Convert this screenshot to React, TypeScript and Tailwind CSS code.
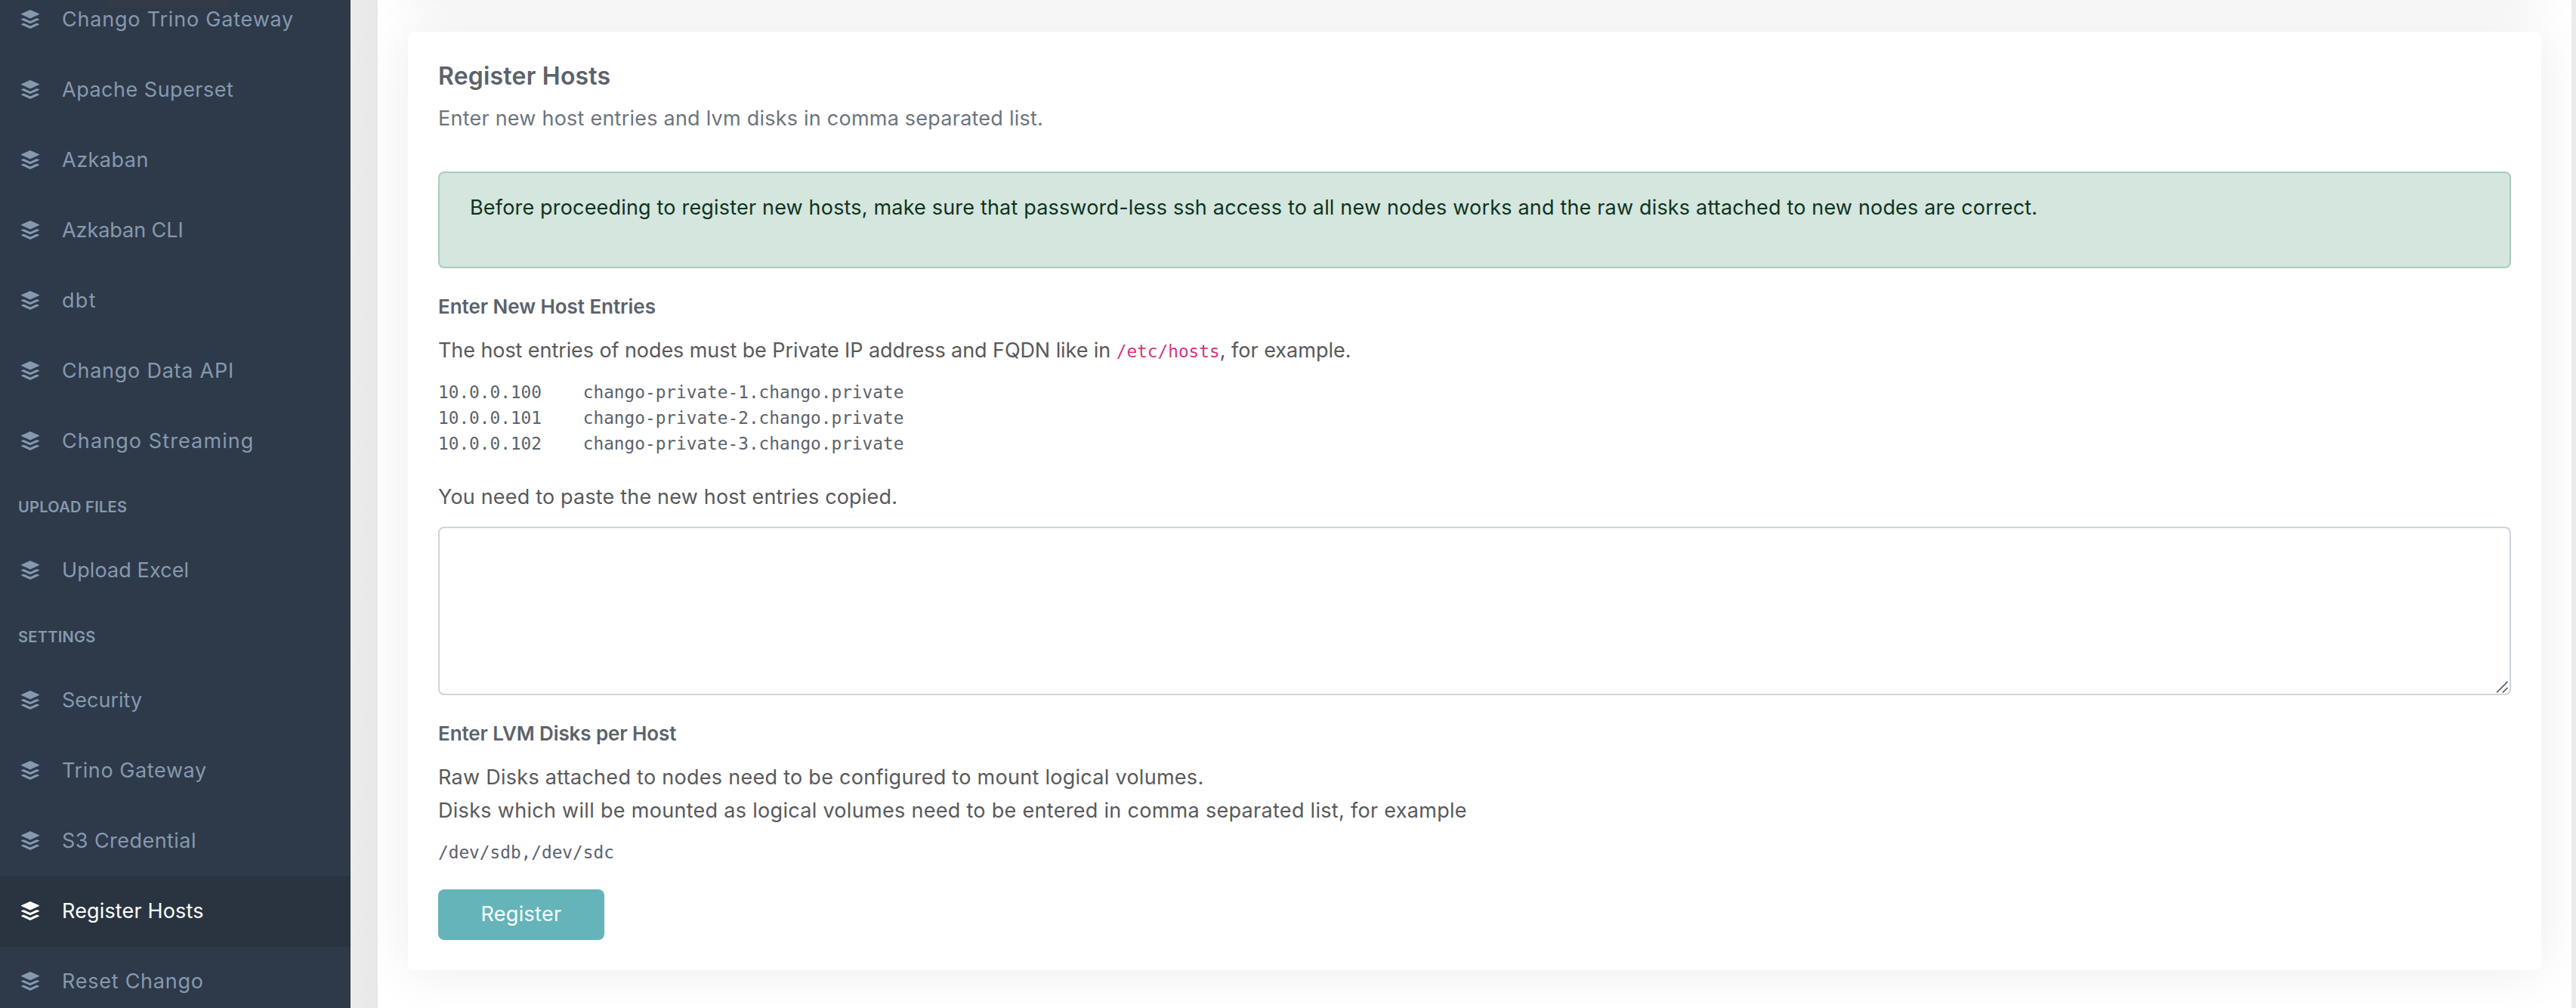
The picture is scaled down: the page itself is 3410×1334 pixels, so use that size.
type Entry = { label: string; ls: string; active?: boolean };

const apps: Entry[] = [
  { label: "Chango Trino Gateway", ls: "tracking-[0.8px]" },
  { label: "Apache Superset", ls: "tracking-[0.5px]" },
  { label: "Azkaban", ls: "tracking-[0.5px]" },
  { label: "Azkaban CLI", ls: "tracking-[-0.05px]" },
  { label: "dbt", ls: "tracking-[1.3px]" },
  { label: "Chango Data API", ls: "tracking-[0.75px]" },
  { label: "Chango Streaming", ls: "tracking-[1.1px]" },
];
const uploads: Entry[] = [{ label: "Upload Excel", ls: "tracking-[0.1px]" }];
const settings: Entry[] = [
  { label: "Security", ls: "tracking-normal" },
  { label: "Trino Gateway", ls: "tracking-[0.6px]" },
  { label: "S3 Credential", ls: "tracking-[0.45px]" },
  { label: "Register Hosts", ls: "tracking-[0.15px]", active: true },
  { label: "Reset Chango", ls: "tracking-[0.75px]" },
];

function StackIcon() {
  return (
    <svg className="h-[25px] w-6 shrink-0" viewBox="0 0 24 25" fill="currentColor">
      <path d="M12 0 24 5.3v.8L12 11.4 0 6.1v-.8Z" />
      <path d="M0 12.3 2.8 11.2h1L12 14.9l8.2-3.7h1L24 12.3v.7L12 18.3 0 13Z" />
      <path d="M0 18.9 2.8 17.8h1L12 21.5l8.2-3.7h1L24 18.9v.7L12 25 0 19.6Z" />
    </svg>
  );
}

function NavItem({ label, ls, active }: Entry) {
  return (
    <a
      className={
        "flex h-[93px] shrink-0 items-center pb-[3px] pl-[28px] " +
        (active ? "bg-[#293440] text-white" : "text-[#8699ad]")
      }
    >
      <StackIcon />
      <span className={"ml-[30px] pt-[2px] text-[27px] whitespace-nowrap " + ls}>{label}</span>
    </a>
  );
}

function NavHeading({ children }: { children: string }) {
  return (
    <div className="flex h-[78.5px] shrink-0 items-center pt-[2px] pl-6 text-[20px] font-semibold tracking-[0.3px] text-[#8699ad]">
      {children}
    </div>
  );
}

export default function App() {
  return (
    <div className="flex h-[1334px] w-[3410px] overflow-hidden bg-[#ebebeb] font-['Inter',sans-serif] text-[27px] text-[#58595b]">
      <nav className="relative flex w-[464px] shrink-0 flex-col bg-[#2e394a]">
        <div className="absolute top-0 left-[144px] h-[10px] w-[159px] bg-[#353b44]" />
        <div className="-mt-5 flex flex-col">
          {apps.map((e) => <NavItem key={e.label} {...e} />)}
          <NavHeading>UPLOAD FILES</NavHeading>
          {uploads.map((e) => <NavItem key={e.label} {...e} />)}
          <NavHeading>SETTINGS</NavHeading>
          {settings.map((e) => <NavItem key={e.label} {...e} />)}
        </div>
      </nav>
      <div className="w-9 shrink-0 bg-linear-to-r from-[#ececec] to-[#e8e8e8]" />
      <main className="flex w-[2904px] flex-col overflow-hidden bg-white">
        <div className="mx-10 -mt-[106px] h-[100px] shrink-0 rounded-[8px] bg-white shadow-[0_0_70px_rgba(0,0,0,0.08)]" />
        <section className="mx-10 mt-12 flex h-[1242px] w-[2824px] shrink-0 flex-col items-start rounded-[8px] bg-white px-10 shadow-[0_0_70px_rgba(0,0,0,0.08)]">
          <h1 className="mt-[39px] text-[32px] leading-[40px] font-semibold tracking-[0.2px] text-[#5b626b]">Register Hosts</h1>
          <p className="mt-[14px] leading-[44px] tracking-[0.23px] text-[#6c757d]">Enter new host entries and lvm disks in comma separated list.</p>
          <div className="mt-[48px] h-[128px] w-full rounded-[8px] border-2 border-[#a9cdbb] bg-[#d4e6de] px-10 pt-[24px] leading-[44px] tracking-[0.18px] text-[#0f3320]">
            <span>Before proceeding to register new hosts, make sure that password-less ssh access to all new nodes works and the raw disks attached to new nodes are correct.</span>
          </div>
          <h2 className="mt-[31px] text-[26px] leading-[40px] font-semibold tracking-[-0.05px] text-[#5b626b]">Enter New Host Entries</h2>
          <p className="mt-[16px] leading-[44px]">
            <span className="tracking-[-0.08px]">The host entries of nodes must be Private IP address and FQDN like in </span>
            <code className="font-['DejaVu_Sans_Mono',monospace] text-[22.75px] text-[#d63384]">/etc/hosts</code>
            <span>, for example.</span>
          </p>
          <pre className="mt-[15px] font-['DejaVu_Sans_Mono',monospace] text-[22.75px] leading-[34px] text-[#5b626b]">{`10.0.0.100    chango-private-1.chango.private
10.0.0.101    chango-private-2.chango.private
10.0.0.102    chango-private-3.chango.private`}</pre>
          <p className="mt-[32px] leading-[44px] tracking-[0.18px]">You need to paste the new host entries copied.</p>
          <div className="relative mt-[17px] h-[223px] w-full rounded-[8px] border-2 border-[#ced4da]">
            <svg className="absolute right-[2px] bottom-[1px] h-4 w-4" viewBox="0 0 16 16" stroke="#555" strokeWidth="1.6" fill="none">
              <path d="M1 15.5 15.5 1M9 15.5 15.5 9" />
            </svg>
          </div>
          <h2 className="mt-[31px] text-[26px] leading-[40px] font-semibold tracking-[-0.1px] text-[#5b626b]">Enter LVM Disks per Host</h2>
          <p className="mt-[16px] leading-[44px] tracking-[0.28px]">Raw Disks attached to nodes need to be configured to mount logical volumes.</p>
          <p className="leading-[44px] tracking-[0.3px]">Disks which will be mounted as logical volumes need to be entered in comma separated list, for example</p>
          <pre className="mt-[16px] font-['DejaVu_Sans_Mono',monospace] text-[22.75px] leading-[34px] text-[#5b626b]">/dev/sdb,/dev/sdc</pre>
          <button className="mt-[32px] h-[67px] w-[220px] rounded-[8px] bg-[#65b4b9] tracking-[0.3px] text-white">Register</button>
        </section>
      </main>
    </div>
  );
}
